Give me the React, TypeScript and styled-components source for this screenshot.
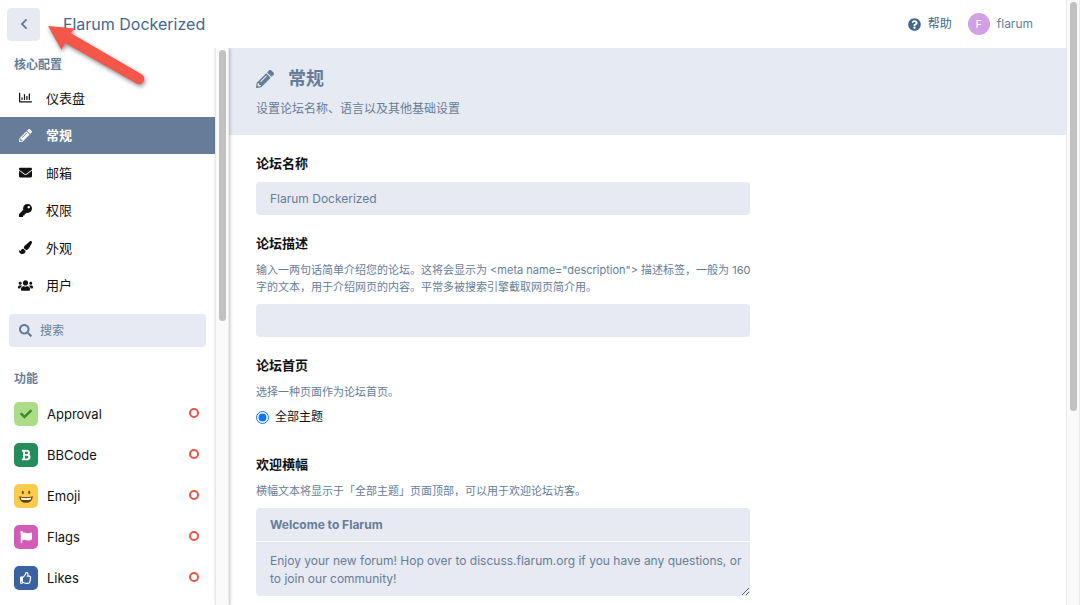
import React from 'react';
import styled, { createGlobalStyle } from 'styled-components';
import {
  FaRegChartBar,
  FaPencilAlt,
  FaEnvelope,
  FaKey,
  FaPaintBrush,
  FaUsers,
  FaSearch,
  FaCheck,
  FaBold,
  FaFlag,
  FaRegThumbsUp,
  FaQuestionCircle,
  FaChevronLeft,
} from 'react-icons/fa';

const color = {
  primary: '#44678f',
  muted: '#667d99',
  control: '#e7eaf2',
  text: '#111111',
  ring: '#e0584a',
};

const GlobalStyle = createGlobalStyle`
  * { box-sizing: border-box; }
  body {
    margin: 0;
    background: #fff;
    color: ${color.text};
    font-family: Inter, 'Noto Sans CJK SC', sans-serif;
    font-size: 13px;
    line-height: 16px;
  }
  h1, h2, p, ul { margin: 0; padding: 0; }
  ul { list-style: none; }
  a { color: inherit; text-decoration: none; }
  button, input, textarea { font: inherit; color: inherit; border: 0; margin: 0; }
`;

const Window = styled.div`
  display: flex;
  height: 100vh;
  overflow: hidden;
`;

const Page = styled.div`
  flex: 1;
  min-width: 0;
  display: flex;
  flex-direction: column;
`;

const ScrollTrack = styled.div<{ $raised?: boolean }>`
  position: relative;
  z-index: 1;
  flex: none;
  width: 14px;
  padding: 2px 3px;
  background: #fafafa;
  border-left: 1px solid #e8e8e8;
  border-right: 1px solid #ececec;
  box-shadow: ${(p) => (p.$raised ? '1px 0 3px rgba(0, 0, 0, 0.25)' : 'none')};
`;

const ScrollThumb = styled.div<{ $share: number }>`
  width: 7px;
  height: ${(p) => p.$share}%;
  border-radius: 4px;
  background: #c1c1c1;
`;

const Header = styled.header`
  position: relative;
  z-index: 2;
  flex: none;
  display: flex;
  align-items: center;
  height: 48px;
  padding: 0 33px 0 7px;
  background: #fff;
`;

const BackButton = styled.button`
  display: flex;
  align-items: center;
  justify-content: center;
  width: 33px;
  height: 33px;
  padding: 0;
  border-radius: 4px;
  background: ${color.control};
  color: ${color.muted};
  font-size: 12px;
`;

const SiteTitle = styled.h1`
  margin-left: 23px;
  font-size: 16px;
  line-height: 24px;
  font-weight: 400;
  color: ${color.primary};
`;

const HeaderLinks = styled.nav`
  display: flex;
  align-items: center;
  gap: 16px;
  margin-left: auto;
  font-size: 12px;
`;

const HeaderLink = styled.a<{ $strong?: boolean }>`
  display: flex;
  align-items: center;
  gap: 7px;
  color: ${(p) => (p.$strong ? color.primary : color.muted)};
`;

const Avatar = styled.span`
  width: 22px;
  height: 22px;
  border-radius: 50%;
  background: #d3a0e5;
  color: #fff;
  font-size: 11px;
  line-height: 22px;
  text-align: center;
`;

const Arrow = styled.svg`
  position: absolute;
  left: 40px;
  top: 16px;
  width: 116px;
  height: 80px;
  pointer-events: none;
  filter: drop-shadow(1px 2px 2px rgba(0, 0, 0, 0.45));
`;

const Body = styled.div`
  flex: 1;
  min-height: 0;
  display: flex;
`;

const Sidebar = styled.aside`
  flex: none;
  width: 215px;
  overflow: hidden;
`;

const SidebarTitle = styled.h2`
  padding: 9px 14px 6px;
  font-size: 12px;
  line-height: 16px;
  font-weight: 600;
  color: ${color.muted};
`;

const NavList = styled.ul`
  display: grid;
  grid-auto-rows: 1fr;
  height: 225px;
`;

const NavLink = styled.a<{ $active?: boolean }>`
  display: flex;
  align-items: center;
  gap: 14px;
  height: 100%;
  padding: 0 18px;
  background: ${(p) => (p.$active ? color.muted : 'transparent')};
  color: ${(p) => (p.$active ? '#fff' : color.text)};
  font-weight: ${(p) => (p.$active ? 700 : 400)};
`;

const NavIcon = styled.span`
  display: flex;
  justify-content: center;
  width: 14px;
  font-size: 13px;
  svg { flex: none; }
`;

const Search = styled.label`
  display: flex;
  align-items: center;
  gap: 8px;
  height: 33px;
  margin: 10px 9px 15px;
  padding: 0 10px;
  border-radius: 4px;
  background: ${color.control};
  color: ${color.muted};
  font-size: 13px;
  svg { flex: none; }
`;

const SearchInput = styled.input`
  flex: 1;
  min-width: 0;
  padding: 0;
  background: transparent;
  outline: 0;
  font-size: 12px;
  &::placeholder { color: ${color.muted}; opacity: 1; }
`;

const ExtensionLink = styled.a`
  display: flex;
  align-items: center;
  gap: 9px;
  height: 41px;
  padding: 0 16px 0 14px;
`;

const ExtensionIcon = styled.span<{ $bg: string; $fg: string }>`
  display: flex;
  align-items: center;
  justify-content: center;
  width: 24px;
  height: 24px;
  border-radius: 5px;
  background: ${(p) => p.$bg};
  color: ${(p) => p.$fg};
  font-size: 12px;
`;

const StatusRing = styled.span`
  width: 10px;
  height: 10px;
  margin: 0 0 2px auto;
  border: 2px solid ${color.ring};
  border-radius: 50%;
`;

const Main = styled.main`
  flex: 1;
  min-width: 0;
  overflow: hidden;
`;

const Banner = styled.div`
  padding: 19px 27px 18px;
  background: #e6eaf2;
  color: ${color.muted};
`;

const BannerTitle = styled.h2`
  display: flex;
  align-items: center;
  gap: 14px;
  margin-bottom: 10px;
  font-size: 18px;
  line-height: 24px;
  font-weight: 700;
`;

const BannerText = styled.p`
  font-size: 12px;
`;

const Form = styled.form`
  display: flex;
  flex-direction: column;
  gap: 20px;
  max-width: 548px;
  padding: 20px 27px;
`;

const Field = styled.div`
  display: flex;
  flex-direction: column;
`;

const FieldLabel = styled.label`
  margin-bottom: 11px;
  font-weight: 700;
`;

const Help = styled.p`
  margin: 0 -6px 8px 0;
  font-size: 11px;
  line-height: 17px;
  color: ${color.muted};
`;

const TextInput = styled.input<{ $heading?: boolean }>`
  height: 33px;
  padding: 0 14px;
  border-radius: ${(p) => (p.$heading ? '4px 4px 0 0' : '4px')};
  background: ${color.control};
  color: ${color.muted};
  font-size: 12px;
  font-weight: ${(p) => (p.$heading ? 700 : 400)};
`;

const TextArea = styled.textarea`
  height: 54px;
  margin-top: 1px;
  padding: 10px 6px 8px 14px;
  border-radius: 0 0 4px 4px;
  background: ${color.control};
  color: ${color.muted};
  font-size: 12px;
  line-height: 18px;
  overflow: hidden;
  resize: vertical;
`;

const RadioLabel = styled.label`
  display: flex;
  align-items: center;
  gap: 6px;
  margin-bottom: 11px;
  font-size: 12px;
`;

const Radio = styled.input`
  width: 13px;
  height: 13px;
  accent-color: #0a75ff;
`;

const Grin = () => (
  <svg width="16" height="16" viewBox="0 0 16 16" aria-hidden="true">
    <ellipse cx="4.800" cy="4.500" rx="1" ry="1.700" fill="#6b4a12" />
    <ellipse cx="11.200" cy="4.500" rx="1" ry="1.700" fill="#6b4a12" />
    <path d="M1.200 8.200Q8 10.200 14.800 8.200Q14.400 14.800 8 14.800Q1.600 14.800 1.200 8.200Z" fill="#5f4010" />
    <path d="M2.600 9.600Q8 10.800 13.400 9.600L12.800 11.400Q8 12.400 3.200 11.400Z" fill="#fff" />
  </svg>
);

const navItems = [
  { label: '仪表盘', icon: <FaRegChartBar /> },
  { label: '常规', icon: <FaPencilAlt />, active: true },
  { label: '邮箱', icon: <FaEnvelope /> },
  { label: '权限', icon: <FaKey /> },
  { label: '外观', icon: <FaPaintBrush /> },
  { label: '用户', icon: <FaUsers size={15} /> },
];

const extensions = [
  { name: 'Approval', icon: <FaCheck />, bg: '#abdc88', fg: '#3f8a2b' },
  { name: 'BBCode', icon: <FaBold />, bg: '#238c59', fg: '#fff' },
  { name: 'Emoji', icon: <Grin />, bg: '#fbcb4b', fg: '#5f4010' },
  { name: 'Flags', icon: <FaFlag />, bg: '#d15db8', fg: '#fff' },
  { name: 'Likes', icon: <FaRegThumbsUp />, bg: '#3a62a0', fg: '#fff' },
];

export default function App() {
  return (
    <Window>
      <GlobalStyle />
      <Page>
        <Header>
          <BackButton type="button" aria-label="返回">
            <FaChevronLeft />
          </BackButton>
          <SiteTitle>
            <a href="#home">Flarum Dockerized</a>
          </SiteTitle>
          <HeaderLinks>
            <HeaderLink href="#help" $strong>
              <FaQuestionCircle size={13} />
              帮助
            </HeaderLink>
            <HeaderLink href="#user">
              <Avatar>F</Avatar>
              flarum
            </HeaderLink>
          </HeaderLinks>
          <Arrow viewBox="40 16 116 80" aria-hidden="true">
            <path
              d="M48 26L75 28.500L70.500 33L142 74.500Q145.500 77.500 143.500 81.500Q141 85.500 136.500 83.500L65 43L61.500 50Z"
              fill="#f4564a"
            />
          </Arrow>
        </Header>
        <Body>
          <Sidebar>
            <SidebarTitle>核心配置</SidebarTitle>
            <NavList>
              {navItems.map((item) => (
                <li key={item.label}>
                  <NavLink href="#nav" $active={item.active}>
                    <NavIcon>{item.icon}</NavIcon>
                    {item.label}
                  </NavLink>
                </li>
              ))}
            </NavList>
            <Search>
              <FaSearch />
              <SearchInput type="search" placeholder="搜索" aria-label="搜索" />
            </Search>
            <SidebarTitle>功能</SidebarTitle>
            <ul>
              {extensions.map((ext) => (
                <li key={ext.name}>
                  <ExtensionLink href="#extension">
                    <ExtensionIcon $bg={ext.bg} $fg={ext.fg}>
                      {ext.icon}
                    </ExtensionIcon>
                    {ext.name}
                    <StatusRing />
                  </ExtensionLink>
                </li>
              ))}
            </ul>
          </Sidebar>
          <ScrollTrack $raised>
            <ScrollThumb $share={49} />
          </ScrollTrack>
          <Main>
            <Banner>
              <BannerTitle>
                <FaPencilAlt />
                常规
              </BannerTitle>
              <BannerText>设置论坛名称、语言以及其他基础设置</BannerText>
            </Banner>
            <Form>
              <Field>
                <FieldLabel htmlFor="forum-title">论坛名称</FieldLabel>
                <TextInput id="forum-title" defaultValue="Flarum Dockerized" />
              </Field>
              <Field>
                <FieldLabel htmlFor="forum-description">论坛描述</FieldLabel>
                <Help>
                  输入一两句话简单介绍您的论坛。这将会显示为 &lt;meta name="description"&gt; 描述标签，一般为 160
                  字的文本，用于介绍网页的内容。平常多被搜索引擎截取网页简介用。
                </Help>
                <TextInput id="forum-description" />
              </Field>
              <Field role="radiogroup" aria-label="论坛首页">
                <FieldLabel as="div">论坛首页</FieldLabel>
                <Help>选择一种页面作为论坛首页。</Help>
                <RadioLabel>
                  <Radio type="radio" name="homepage" defaultChecked />
                  全部主题
                </RadioLabel>
              </Field>
              <Field>
                <FieldLabel htmlFor="welcome-title">欢迎横幅</FieldLabel>
                <Help>横幅文本将显示于「全部主题」页面顶部，可以用于欢迎论坛访客。</Help>
                <TextInput id="welcome-title" $heading defaultValue="Welcome to Flarum" />
                <TextArea
                  aria-label="欢迎横幅"
                  defaultValue="Enjoy your new forum! Hop over to discuss.flarum.org if you have any questions, or to join our community!"
                />
              </Field>
            </Form>
          </Main>
        </Body>
      </Page>
      <ScrollTrack>
        <ScrollThumb $share={68} />
      </ScrollTrack>
    </Window>
  );
}
